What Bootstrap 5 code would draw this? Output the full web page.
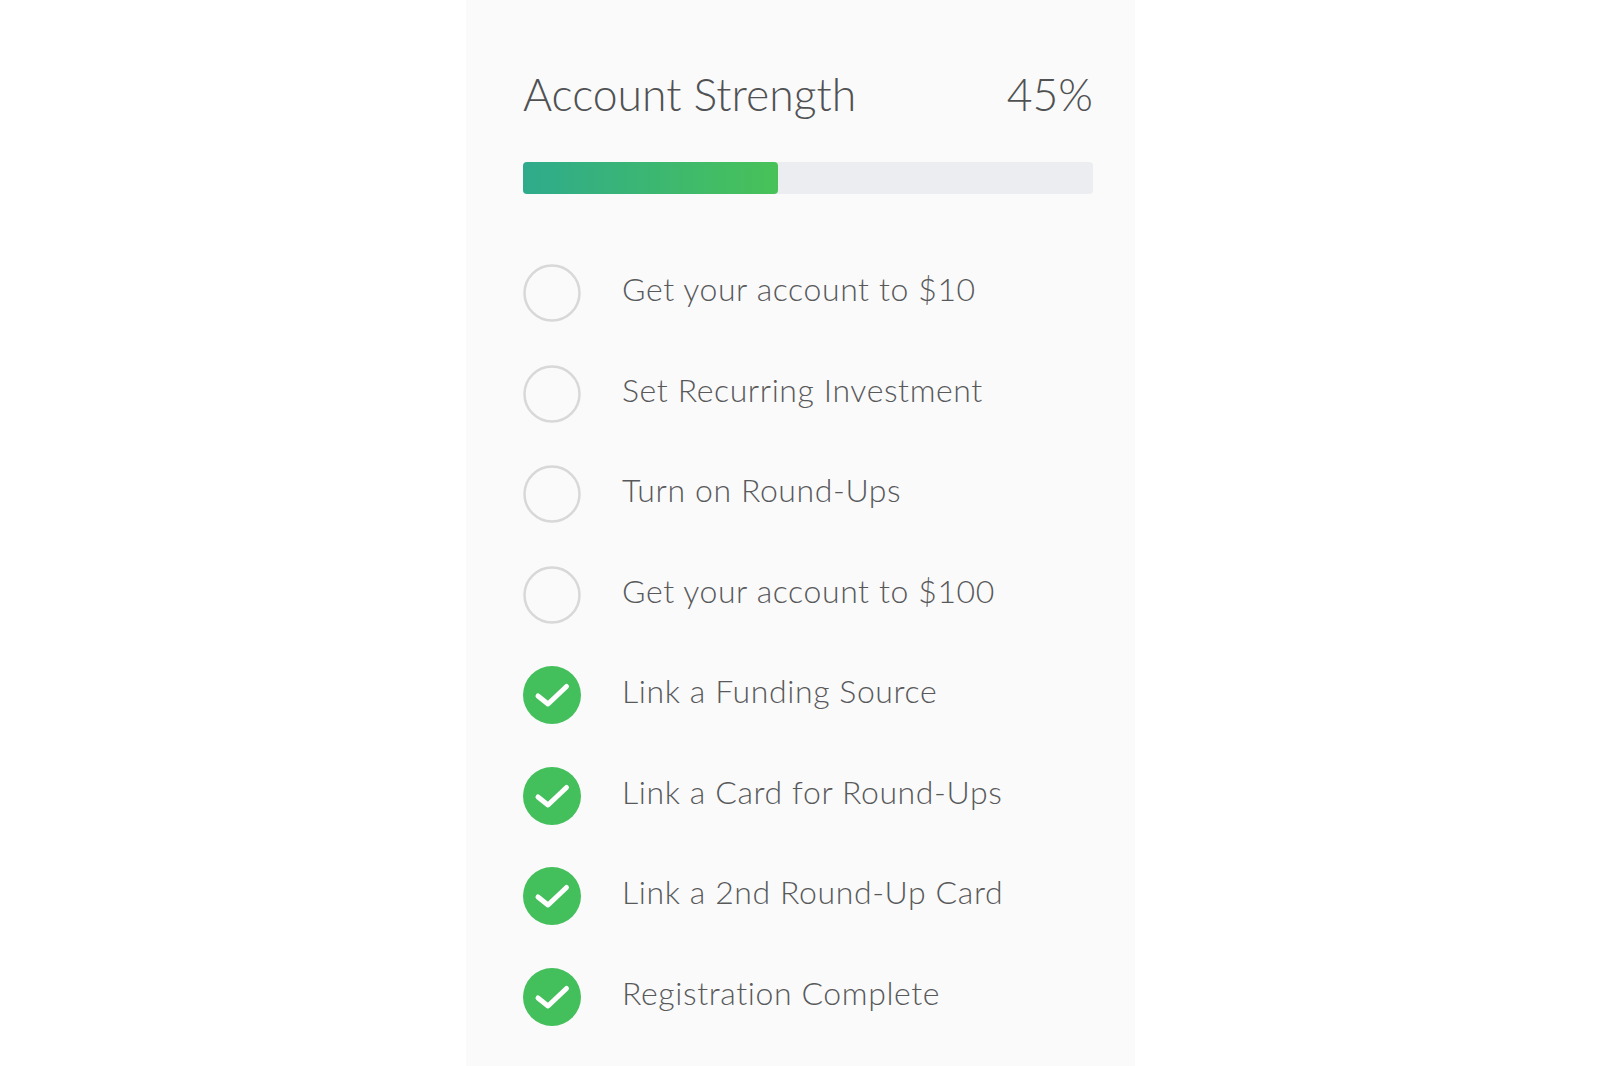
<!DOCTYPE html>
<html lang="en">
<head>
    <meta charset="UTF-8">
    <meta name="viewport" content="width=device-width, initial-scale=1.0">
    <title>Account Strength</title>
    <link href="https://cdn.jsdelivr.net/npm/bootstrap@5.3.0/dist/css/bootstrap.min.css" rel="stylesheet">
    <script src="https://cdn.jsdelivr.net/npm/bootstrap@5.3.0/dist/js/bootstrap.bundle.min.js"></script>
    <style>
        html, body {
            height: 100%;
        }
        body {
            background: #fff;
            font-family: "Lato", "Liberation Sans", sans-serif;
            color: #58595b;
            overflow: hidden;
        }
        .panel-strength {
            width: 669px;
            height: 1066px;
            margin-left: 466px;
            padding: 66px 42px 0 57px;
            background: #fafafa;
        }
        .strength-title {
            font-size: 44.5px;
            font-weight: 300;
            line-height: 56px;
            color: #505153;
        }
        .strength-bar {
            height: 32px;
            margin-top: 40px;
            margin-bottom: 70px;
            background: #ecedf0;
            border-radius: 4px;
        }
        .strength-fill {
            background: linear-gradient(to right, #2fab8c, #48c258);
            border-radius: 4px;
        }
        .step-row {
            height: 58px;
            margin-bottom: 42.5px;
            gap: 41px;
        }
        .step-dot {
            width: 58px;
            height: 58px;
            flex: none;
        }
        .step-label {
            font-size: 32px;
            font-weight: 300;
            letter-spacing: .6px;
            line-height: 58px;
            margin-top: -8px;
        }
    </style>
</head>
<body>
    <div class="panel-strength">
        <div class="d-flex justify-content-between strength-title">
            <span>Account Strength</span>
            <span>45%</span>
        </div>
        <div class="strength-bar d-flex">
            <div class="strength-fill" style="width: 44.7%"></div>
        </div>
        <div id="steps"></div>
    </div>

    <script>
        const steps = [
            ["Get your account to $10", false],
            ["Set Recurring Investment", false],
            ["Turn on Round-Ups", false],
            ["Get your account to $100", false],
            ["Link a Funding Source", true],
            ["Link a Card for Round-Ups", true],
            ["Link a 2nd Round-Up Card", true],
            ["Registration Complete", true]
        ];
        const open = '<circle cx="29" cy="29" r="27.5" fill="none" stroke="#d8d8d8" stroke-width="2.5"/>';
        const done = '<circle cx="29" cy="29" r="29" fill="#43bf5c"/><path d="M15 30 L25 38 L43.5 20.5" fill="none" stroke="#fff" stroke-width="5" stroke-linecap="round" stroke-linejoin="round"/>';
        document.getElementById("steps").innerHTML = steps.map(s => `
            <div class="step-row d-flex align-items-center">
                <svg class="step-dot" viewBox="0 0 58 58">${s[1] ? done : open}</svg>
                <span class="step-label">${s[0]}</span>
            </div>`).join("");
    </script>
</body>
</html>
